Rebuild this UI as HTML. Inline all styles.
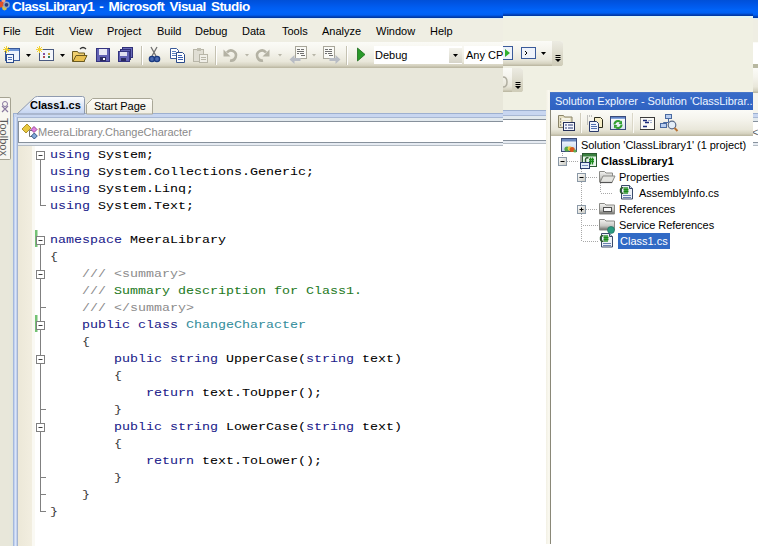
<!DOCTYPE html>
<html><head><meta charset="utf-8"><style>
*{margin:0;padding:0;box-sizing:border-box}
html,body{width:758px;height:546px;overflow:hidden;background:#fff}
body{position:relative;font-family:"Liberation Sans",sans-serif;font-size:11px;color:#000}
.a{position:absolute}
.t{position:absolute;white-space:pre;line-height:13px}
.l{position:absolute;left:50px;white-space:pre;font-family:"Liberation Mono",monospace;font-size:13.333px;line-height:17px;color:#000;transform:scaleY(.82);transform-origin:0 12px;-webkit-text-stroke:.05px currentColor}
.k{color:#20208a}
.c{color:#1e7a1e}
.g{color:#8c8c8c;-webkit-text-stroke:0}
.ty{color:#348e9c}
.b{color:#3a3a3a;-webkit-text-stroke:0}
</style></head><body>
<div class="a" style="left:0;top:0;width:758px;height:546px;overflow:hidden">
<div class="a" style="left:0;top:0;width:758px;height:18px;background:linear-gradient(#0050d8 0,#0056e6 4px,#005ef2 8px,#0064f9 12px,#0060f2 15px,#0046c0 16.5px,#00349a 18px)"></div>
<div class="a" style="left:0;top:18px;width:758px;height:1px;background:#d8ecf8"></div>
<div class="t" style="left:12px;top:0px;line-height:14px;font-weight:bold;font-size:13.5px;letter-spacing:-.55px;word-spacing:2px;color:#fff">ClassLibrary1 - Microsoft Visual Studio</div>
<svg class="a" style="left:0;top:0" width="12" height="14"><circle cx="3.5" cy="1" r="2" fill="#f0a088"/><circle cx="1" cy="4.5" r="3" fill="#e05028"/><circle cx="4.5" cy="8" r="2.4" fill="#d0c050"/><circle cx="6.5" cy="4.8" r="2.6" fill="#283a78" stroke="#90a8c8" stroke-width="1.4"/></svg>
<div class="a" style="left:0;top:19px;width:758px;height:24px;background:#efeee3"></div>
<div class="t" style="left:3px;top:25px">File</div>
<div class="t" style="left:35px;top:25px">Edit</div>
<div class="t" style="left:69px;top:25px">View</div>
<div class="t" style="left:107px;top:25px">Project</div>
<div class="t" style="left:157px;top:25px">Build</div>
<div class="t" style="left:195px;top:25px">Debug</div>
<div class="t" style="left:242px;top:25px">Data</div>
<div class="t" style="left:282px;top:25px">Tools</div>
<div class="t" style="left:322px;top:25px">Analyze</div>
<div class="t" style="left:376px;top:25px">Window</div>
<div class="t" style="left:430px;top:25px">Help</div>
<div class="a" style="left:0;top:68px;width:758px;height:478px;background:#e8e7da"></div>
<div class="a" style="left:0;top:42px;width:758px;height:26px;background:linear-gradient(#fbfbf7,#f5f4ed 35%,#e9e7da 75%,#d6d3c1 90%,#b8b49e)"></div>
<svg class="a" style="left:0;top:43px" width="503" height="25">
    <rect x="5.5" y="5.5" width="14" height="12" fill="#eef3fb" stroke="#3a5a9a"/>
    <rect x="6" y="6" width="13" height="2" fill="#6f96d8"/>
    <rect x="6.5" y="11.5" width="7" height="8" fill="#f4f6fb" stroke="#2c4c8c"/>
    <path d="M8 14.5h4M8 16.5h4" stroke="#4c70b8"/>
    <path d="M4 4l5 5M9 4l-5 5M6.5 3v7M3 6.5h7" stroke="#f2d030"/>
    <path d="M26 11h5l-2.5 3z" fill="#000"/>
    <rect x="39.5" y="6.5" width="14" height="11" fill="#f4f6fb" stroke="#4a5a80"/>
    <rect x="43" y="10" width="2" height="2" fill="#8050a0"/><rect x="48" y="10" width="2" height="2" fill="#c0a040"/>
    <rect x="43" y="13" width="2" height="2" fill="#b05050"/><rect x="48" y="13" width="2" height="2" fill="#308060"/>
    <path d="M37 4l5 5M42 4l-5 5M39.5 3v7M36 6.5h7" stroke="#f2d030"/>
    <path d="M60 11h5l-2.5 3z" fill="#000"/>
    <path d="M72.5 8.5h5l1 1.5h6v8.5h-12z" fill="#f0d070" stroke="#6a5a20"/>
    <path d="M73 18.5l3-6h11l-3 6z" fill="#e8c050" stroke="#6a5a20"/>
    <path d="M80 6q3-3 6 0" stroke="#303030" fill="none" stroke-width="1.2"/>
    <rect x="96.5" y="5.5" width="13" height="13" fill="#6262b4" stroke="#343480"/>
    <rect x="99" y="6" width="8" height="6" fill="#e8e8f4"/>
    <rect x="100" y="14" width="6" height="4" fill="#2a2a60"/><rect x="103" y="15" width="2" height="2" fill="#fff"/>
    <rect x="122.5" y="4.5" width="10" height="10" fill="#6a6ab8" stroke="#303078"/>
    <rect x="120.5" y="6.5" width="10" height="10" fill="#6060b0" stroke="#303078"/>
    <rect x="118.5" y="8.5" width="11" height="10" fill="#6262b4" stroke="#343480"/>
    <rect x="120" y="9" width="7" height="4" fill="#e0e0f0"/>
    <rect x="121" y="15" width="5" height="3" fill="#2a2a60"/>
    <path d="M141.5 3v19" stroke="#c5c2b2"/><path d="M142.5 3v19" stroke="#fff"/>
    <path d="M151 4l5 9M157 4l-5 9" stroke="#707070" stroke-width="1.3"/>
    <circle cx="152" cy="16" r="2.6" fill="#4a6ab0" stroke="#1a3a80" stroke-width="1.4"/>
    <circle cx="157" cy="16" r="2.6" fill="#4a6ab0" stroke="#1a3a80" stroke-width="1.4"/>
    <path d="M170.5 5.5h6l2 2v8h-8z" fill="#fff" stroke="#3a5a9a"/>
    <path d="M172 8.5h4M172 10.5h5M172 12.5h5" stroke="#5a80c0"/>
    <path d="M176.5 9.5h6l2 2v8h-8z" fill="#fff" stroke="#2a4a8a"/>
    <path d="M178 12.5h4M178 14.5h5M178 16.5h5" stroke="#3a60b0"/>
    <rect x="193.5" y="6.5" width="10" height="12" fill="#e0ded4" stroke="#b8b6a8"/>
    <rect x="197" y="5" width="4" height="3" fill="#c0beb0"/>
    <rect x="199.5" y="11.5" width="8" height="8" fill="#f0efe8" stroke="#b8b6a8"/>
    <path d="M201 14.5h5M201 16.5h5" stroke="#b8b6a8"/>
    <path d="M215.5 3v19" stroke="#c5c2b2"/><path d="M216.5 3v19" stroke="#fff"/>
    <path d="M227 9.5a5 5 0 1 1 3 8" stroke="#b4b2a4" fill="none" stroke-width="2.6"/>
    <path d="M223.5 6.5v7h7z" fill="#b4b2a4"/>
    <path d="M245 11h4l-2 2.5z" fill="#b8b6a8"/>
    <path d="M266 9.5a5 5 0 1 0-3 8" stroke="#b4b2a4" fill="none" stroke-width="2.6"/>
    <path d="M269.5 6.5v7h-7z" fill="#b4b2a4"/>
    <path d="M278 11h4l-2 2.5z" fill="#b8b6a8"/>
    <rect x="295.5" y="3.5" width="11" height="12" fill="#fafaf6" stroke="#a8a69a"/>
    <path d="M297 6.5h3M301 6.5h3M297 8.5h7M297 10.5h2M300 10.5h4M301 12.5h4" stroke="#707070"/>
    <path d="M289.5 16.5l5-4.5v3h6v3h-6v3z" fill="#b8bcc4"/>
    <path d="M312 11h4l-2 2.5z" fill="#b8b6a8"/>
    <rect x="323.5" y="3.5" width="11" height="12" fill="#fafaf6" stroke="#a8a69a"/>
    <path d="M325 6.5h3M329 6.5h3M325 8.5h7M325 10.5h2M328 10.5h4M329 12.5h4" stroke="#707070"/>
    <path d="M340.5 16.5l-5-4.5v3h-6v3h6v3z" fill="#b8bcc4"/>
    <path d="M346.5 3v19" stroke="#c5c2b2"/><path d="M347.5 3v19" stroke="#fff"/>
    <path d="M357.5 5l7.5 6.5-7.5 6.5z" fill="#2a9a2a" stroke="#1a6a1a" stroke-width=".8"/>
    <rect x="374" y="3" width="88" height="18" fill="#fff"/>
    <defs><linearGradient id="dd" x1="0" y1="0" x2="0" y2="1"><stop offset="0" stop-color="#f4f3ec"/><stop offset="1" stop-color="#d6d4c8"/></linearGradient></defs>
    <rect x="449" y="5" width="13" height="15" fill="url(#dd)"/>
    <path d="M453 11h5l-2.5 3z" fill="#000"/>
    <rect x="464" y="3" width="39" height="18" fill="#fff"/>
  </svg>
<div class="t" style="left:375px;top:49px">Debug</div>
<div class="t" style="left:466px;top:49px">Any CPU</div>
<div class="a" style="left:753px;top:43px;width:5px;height:21px;background:#fff"></div>
<div class="a" style="left:753px;top:64px;width:5px;height:4px;background:#b8b8a0"></div>
<div class="a" style="left:753px;top:68px;width:5px;height:25px;background:linear-gradient(#fbfbf7,#f5f4ed 35%,#e9e7da 75%,#d6d3c1 90%,#b8b49e)"></div>
<div class="a" style="left:753px;top:93px;width:5px;height:20px;background:#f6f5ee"></div>
<div class="a" style="left:0;top:97px;width:11px;height:63px;background:#f8f7f1;border:1px solid #a5a392;border-left:none;border-radius:0 2px 2px 0"></div>
<svg class="a" style="left:0;top:100px" width="11" height="14"><circle cx="5" cy="4" r="2.5" fill="none" stroke="#8a7aa0"/><path d="M2 12l6-6M8 12l-6-6" stroke="#8a7aa0" stroke-width="1.2"/></svg>
<div class="t" style="left:-3px;top:118px;writing-mode:vertical-rl;font-size:11px;color:#5a5a5a">Toolbox</div>
<div class="a" style="left:13px;top:113px;width:745px;height:433px;background:#c8d6f0;border-top:1px solid #9db0d0;border-left:1px solid #9db0d0"></div>
<div class="a" style="left:18px;top:117px;width:740px;height:1px;background:#a8b8d4"></div>
<div class="a" style="left:18px;top:118px;width:740px;height:3px;background:#e2e9ee"></div>
<div class="a" style="left:13px;top:117px;width:5px;height:429px;background:linear-gradient(90deg,#a4b8dc 0 1px,#c2d2f0 1px 2px,#dce6f8 2px 3px,#c2d2f0 3px 4px,#a4b4d0 4px 5px)"></div>
<div class="a" style="left:9px;top:160px;width:4px;height:386px;background:linear-gradient(90deg,#e8e7da,#dfe5dc)"></div>
<svg class="a" style="left:12px;top:95px" width="160" height="20">
    <defs><linearGradient id="tg" x1="0" y1="0" x2="0" y2="1"><stop offset="0" stop-color="#fcfdff"/><stop offset="1" stop-color="#c3d3f0"/></linearGradient>
    <linearGradient id="tg2" x1="0" y1="0" x2="0" y2="1"><stop offset="0" stop-color="#fdfcf8"/><stop offset="1" stop-color="#f0eee2"/></linearGradient></defs>
    <path d="M74.5 19V9.5L80.5 3.5H138.5q2 0 2 2V19z" fill="url(#tg2)" stroke="#a9a797"/>
    <path d="M5 19L22.5 2.5q1-1 3-1H70.5q2 0 2 2V19z" fill="url(#tg)" stroke="#8e9aaf"/>
  </svg>
<div class="t" style="left:30px;top:99px;font-weight:bold">Class1.cs</div>
<div class="t" style="left:94px;top:100px">Start Page</div>
<div class="a" style="left:18px;top:121px;width:740px;height:22px;background:#fff;border:1px solid #87919c;border-right:none"></div>
<div class="a" style="left:18px;top:143px;width:740px;height:2px;background:#e6ebf2"></div>
<div class="a" style="left:18px;top:145px;width:740px;height:1px;background:#b4bcc4"></div>
<div class="t" style="left:38px;top:126px;color:#8a8a8a">MeeraLibrary.ChangeCharacter</div>
<svg class="a" style="left:21px;top:124px" width="18" height="18">
    <path d="M11 6.5H8.5V12.5H11" stroke="#707070" fill="none"/>
    <path d="M1 5L6 0L10 4L5 9z" fill="#e8c840" stroke="#a88a20" stroke-width=".9"/>
    <path d="M10 5.5L13 2.5L16 5.5L13 8.5z" fill="#e080e0" stroke="#8a3a8a" stroke-width=".9"/>
    <path d="M10.3 12L13.3 9L16.3 12L13.3 15z" fill="#80a8d8" stroke="#2a4a7a" stroke-width=".9"/>
  </svg>
<div class="a" style="left:18px;top:146px;width:740px;height:400px;background:#fff"></div>
<div class="a" style="left:18px;top:146px;width:14px;height:400px;background:linear-gradient(90deg,#ece8d8,#f2eee0)"></div>
<div class="a" style="left:32px;top:146px;width:3px;height:400px;background:#faf9f3"></div>
<svg class="a" style="left:30px;top:145px" width="20" height="401"><rect x="5" y="85" width="2.5" height="17" fill="#74c274"/><rect x="5" y="170" width="2.5" height="17" fill="#74c274"/><path d="M10.5 15V61" stroke="#808080"/><path d="M10 60.5h6" stroke="#808080"/><path d="M10.5 100V367" stroke="#808080"/><path d="M10 366.5h6" stroke="#808080"/><path d="M10 162.5h6" stroke="#808080"/><path d="M10 264.5h6" stroke="#808080"/><path d="M10 332.5h6" stroke="#808080"/><path d="M10 349.5h6" stroke="#808080"/><rect x="6.5" y="6.5" width="8" height="8" fill="#fff" stroke="#808080"/><path d="M8.5 10.5h4" stroke="#404040"/><rect x="6.5" y="91.5" width="8" height="8" fill="#fff" stroke="#808080"/><path d="M8.5 95.5h4" stroke="#404040"/><rect x="6.5" y="125.5" width="8" height="8" fill="#fff" stroke="#808080"/><path d="M8.5 129.5h4" stroke="#404040"/><rect x="6.5" y="176.5" width="8" height="8" fill="#fff" stroke="#808080"/><path d="M8.5 180.5h4" stroke="#404040"/><rect x="6.5" y="210.5" width="8" height="8" fill="#fff" stroke="#808080"/><path d="M8.5 214.5h4" stroke="#404040"/><rect x="6.5" y="278.5" width="8" height="8" fill="#fff" stroke="#808080"/><path d="M8.5 282.5h4" stroke="#404040"/></svg>
<div class="l" style="top:146px"><span class="k">using</span> System;</div>
<div class="l" style="top:163px"><span class="k">using</span> System.Collections.Generic;</div>
<div class="l" style="top:180px"><span class="k">using</span> System.Linq;</div>
<div class="l" style="top:197px"><span class="k">using</span> System.Text;</div>
<div class="l" style="top:231px"><span class="k">namespace</span> MeeraLibrary</div>
<div class="l" style="top:248px"><span class="b">{</span></div>
<div class="l" style="top:265px">    <span class="g">/// &lt;summary&gt;</span></div>
<div class="l" style="top:282px">    <span class="g">///</span><span class="c"> Summary description for Class1.</span></div>
<div class="l" style="top:299px">    <span class="g">/// &lt;/summary&gt;</span></div>
<div class="l" style="top:316px">    <span class="k">public class</span> <span class="ty">ChangeCharacter</span></div>
<div class="l" style="top:333px">    <span class="b">{</span></div>
<div class="l" style="top:350px">        <span class="k">public string</span> UpperCase(<span class="k">string</span> text)</div>
<div class="l" style="top:367px">        <span class="b">{</span></div>
<div class="l" style="top:384px">            <span class="k">return</span> text.ToUpper();</div>
<div class="l" style="top:401px">        <span class="b">}</span></div>
<div class="l" style="top:418px">        <span class="k">public string</span> LowerCase(<span class="k">string</span> text)</div>
<div class="l" style="top:435px">        <span class="b">{</span></div>
<div class="l" style="top:452px">            <span class="k">return</span> text.ToLower();</div>
<div class="l" style="top:469px">        <span class="b">}</span></div>
<div class="l" style="top:486px">    <span class="b">}</span></div>
<div class="l" style="top:503px"><span class="b">}</span></div>
<div class="t" style="left:752px;top:126px;color:#606060">&lt;</div>
</div>
<div class="a" style="left:503px;top:0;width:250px;height:546px;overflow:hidden">
<div class="a" style="left:0;top:0;width:250px;height:16px;background:linear-gradient(#0050d8 0,#0056e6 4px,#005ef2 8px,#0064f9 10px,#0060f2 13px,#0046c0 14.5px,#00349a 16px)"></div>
<div class="a" style="left:0;top:16px;width:250px;height:2px;background:#e2f6f4"></div>
<div class="a" style="left:0;top:18px;width:250px;height:526px;background:#f0f0e3"></div>
<div class="a" style="left:0;top:110px;width:43px;height:1px;background:#9db0d0"></div>
<div class="a" style="left:0;top:111px;width:43px;height:4px;background:#c8d6f0"></div>
<div class="a" style="left:0;top:115px;width:43px;height:1px;background:#a8b8d4"></div>
<div class="a" style="left:0;top:116px;width:43px;height:3px;background:#e2e9ee"></div>
<div class="a" style="left:0;top:119px;width:43px;height:22px;background:#fff;border-top:1px solid #87919c;border-bottom:1px solid #87919c"></div>
<div class="a" style="left:0;top:141px;width:43px;height:2px;background:#e6ebf2"></div>
<div class="a" style="left:0;top:143px;width:43px;height:1px;background:#b4bcc4"></div>
<div class="a" style="left:0;top:144px;width:43px;height:402px;background:#fff"></div>
<div class="a" style="left:0;top:544px;width:250px;height:2px;background:#fff"></div>
<div class="a" style="left:0;top:41px;width:60px;height:25px;border-radius:0 3px 3px 0;background:linear-gradient(#fbfbf7,#f5f4ed 35%,#e9e7da 75%,#d6d3c1 90%,#b8b49e)"></div>
<div class="a" style="left:49px;top:41px;width:11px;height:25px;border-radius:0 3px 3px 0;background:linear-gradient(#ecebe2,#cfccb8)"></div>
<div class="a" style="left:0;top:68px;width:20px;height:24px;border-radius:0 3px 3px 0;background:linear-gradient(#fbfbf7,#f5f4ed 35%,#e9e7da 75%,#d6d3c1 90%,#b8b49e)"></div>
<div class="a" style="left:9px;top:68px;width:11px;height:24px;border-radius:0 3px 3px 0;background:linear-gradient(#ecebe2,#cfccb8)"></div>
<svg class="a" style="left:0;top:41px" width="60" height="52">
    <rect x="-4.5" y="5.5" width="14" height="13" fill="#eef2fa" stroke="#3a5a9a"/>
    <path d="M2 8l5 4-5 4z" fill="#30b030"/>
    <rect x="18.5" y="6.5" width="14" height="11" fill="#eef2fa" stroke="#3a5a9a"/>
    <path d="M22 10l2 2-2 2" stroke="#000" fill="none"/>
    <path d="M38 11h5l-2.5 3z" fill="#000"/>
    <path d="M52.5 14.5h5M52.5 16.5h5" stroke="#000"/><path d="M52 18h6l-3 3z" fill="#000"/>
    <path d="M12.5 41.5h5M12.5 43.5h5" stroke="#000"/><path d="M12 45h6l-3 3z" fill="#000"/>
    <path d="M0 36q4 0 4 5t-4 5" stroke="#b0aea0" fill="none" stroke-width="1.5"/>
  </svg>
<div class="a" style="left:0;top:41px;width:0px;height:25px;background:#fff"></div>
<div class="a" style="left:43px;top:90px;width:207px;height:454px;background:linear-gradient(90deg,#f2f0e4,#fbfaf2 3px,#f4f2e6 4px)"></div>
<div class="a" style="left:47px;top:109px;width:1px;height:435px;background:#8a8878"></div>
<div class="a" style="left:48px;top:92px;width:202px;height:452px;background:#fff"></div>
<div class="a" style="left:47px;top:92px;width:203px;height:18px;background:linear-gradient(#5a80c8 0,#3a6cc8 1px,#3366c6 60%,#2f62c0)"></div>
<div class="t" style="left:52px;top:95px;color:#eef6ff;letter-spacing:-.05px">Solution Explorer - Solution 'ClassLibrar...</div>
<div class="a" style="left:48px;top:110px;width:202px;height:26px;background:linear-gradient(#fbfbf7,#f5f4ed 35%,#e9e7da 75%,#d6d3c1 90%,#b8b49e)"></div>
<svg class="a" style="left:48px;top:110px" width="202" height="26">
    <defs>
      <linearGradient id="rw" x1="0" y1="0" x2="0" y2="1"><stop offset="0" stop-color="#ffffff"/><stop offset="1" stop-color="#d8e2f0"/></linearGradient>
      <linearGradient id="rt" x1="0" y1="0" x2="0" y2="1"><stop offset="0" stop-color="#4a72c0"/><stop offset="1" stop-color="#9ab4e0"/></linearGradient>
    </defs>
    <!-- properties -->
    <path d="M7.5 17.5V5.5h5l1 1.5h7.5v10.5z" fill="#e6e0c4" stroke="#8a8468"/>
    <path d="M11 9h8M11 12h8M11 15h4" stroke="#fbfaf4" stroke-width="1.6"/>
    <path d="M9 9h1M9 12h1M9 15h1" stroke="#505050"/>
    <rect x="12.5" y="12.5" width="11" height="8" fill="#f4f6fc" stroke="#25305a"/>
    <path d="M14 15h2M17 15h5M14 18h2M17 18h5" stroke="#2a3a78" stroke-width="1.2"/>
    <path d="M29.5 3v20" stroke="#cfccbc"/><path d="M30.5 3v20" stroke="#fbfaf5"/>
    <!-- show all files -->
    <path d="M36 6h1M38 6h1M40 6h1M36 8h1M36 10h1M36 12h1M36 14h1" stroke="#8a8a8a"/>
    <path d="M43.5 7.5h6l2 2v8h-8z" fill="#f6eec8" stroke="#2a2a1a"/>
    <path d="M38.5 11.5h7l2 2v8h-9z" fill="#f0f4fc" stroke="#2a3a6a"/>
    <path d="M40 14.5h5M40 16.5h6M40 18.5h6" stroke="#5070b0"/>
    <!-- refresh -->
    <rect x="59.5" y="6.5" width="15" height="13" fill="url(#rw)" stroke="#3a4a7a"/>
    <rect x="60" y="7" width="14" height="2" fill="url(#rt)"/>
    <path d="M63.5 14.5a3.5 3.5 0 0 1 6-2.5" stroke="#30a030" stroke-width="2" fill="none"/>
    <path d="M71 10.5v3.5h-3.5z" fill="#30a030"/>
    <path d="M70.5 14.5a3.5 3.5 0 0 1-6 2.5" stroke="#30a030" stroke-width="2" fill="none"/>
    <path d="M63 18.5v-3.5h3.5z" fill="#30a030"/>
    <path d="M81.5 3v20" stroke="#dad7c8"/><path d="M82.5 3v20" stroke="#fbfaf5"/>
    <!-- view code -->
    <rect x="89.5" y="7.5" width="14" height="12" fill="#fafaf6" stroke="#3a3a3a"/>
    <path d="M89.5 8v11" stroke="#888" stroke-width="1"/>
    <path d="M92 10.5h4M94 12.5h4M92 16.5h4" stroke="#1a2a7a" stroke-width="1.4"/>
    <path d="M97 10.5h4M99 12.5h2" stroke="#a8b4d0" stroke-width="1"/>
    <!-- class diagram -->
    <rect x="114.5" y="4.5" width="6" height="4" fill="#b8cef0" stroke="#4a6aa0"/>
    <rect x="109.5" y="13.5" width="6" height="4" fill="#b8cef0" stroke="#4a6aa0"/>
    <path d="M117.5 9v3.5h-5v1" stroke="#4a6aa0" fill="none"/>
    <circle cx="121" cy="15" r="3.8" fill="#e4eef8" stroke="#5a6a88" stroke-width="1.2"/>
    <path d="M123.5 18l3 3" stroke="#b87030" stroke-width="2"/>
  </svg>
<div class="t" style="left:78px;top:139px;letter-spacing:-.05px">Solution 'ClassLibrary1' (1 project)</div>
<div class="t" style="left:98px;top:155px;font-weight:bold">ClassLibrary1</div>
<div class="t" style="left:116px;top:171px">Properties</div>
<div class="t" style="left:136px;top:187px">AssemblyInfo.cs</div>
<div class="t" style="left:116px;top:203px">References</div>
<div class="t" style="left:116px;top:219px;letter-spacing:-.05px">Service References</div>
<div class="a" style="left:115px;top:233px;width:52px;height:16px;background:#316ac5"></div>
<div class="t" style="left:117px;top:235px;color:#fff">Class1.cs</div>
<svg class="a" style="left:48px;top:136px" width="150" height="120">
    <defs>
      <linearGradient id="fg" x1="0" y1="0" x2="0" y2="1"><stop offset="0" stop-color="#f4f4f2"/><stop offset=".6" stop-color="#c8c8c4"/><stop offset="1" stop-color="#6a6a66"/></linearGradient>
      <linearGradient id="bx" x1="0" y1="0" x2="1" y2="1"><stop offset="0" stop-color="#fff"/><stop offset="1" stop-color="#c8c8c0"/></linearGradient>
      <linearGradient id="sg" x1="0" y1="0" x2="0" y2="1"><stop offset="0" stop-color="#fafcff"/><stop offset="1" stop-color="#c0d4f0"/></linearGradient>
    </defs>
    <g stroke="#a8a8a8" stroke-dasharray="1 1">
    <path d="M11.5 17v4"/><path d="M16 25.5h12"/>
    <path d="M30.5 33v4M30.5 46v60"/>
    <path d="M35 41.5h12M35 73.5h12M32 89.5h15M32 105.5h15"/>
    <path d="M49.5 47v10M50 57.5h11"/>
    </g>
    <rect x="7.5" y="21.5" width="8" height="8" fill="url(#bx)" stroke="#8a98a6"/><path d="M9.5 25.5h4" stroke="#000"/>
    <rect x="26.5" y="37.5" width="8" height="8" fill="url(#bx)" stroke="#8a98a6"/><path d="M28.5 41.5h4" stroke="#000"/>
    <rect x="26.5" y="69.5" width="8" height="8" fill="url(#bx)" stroke="#8a98a6"/><path d="M28.5 73.5h4M30.5 71.5v4" stroke="#000"/>
    <!-- solution -->
    <rect x="10.5" y="2.5" width="15" height="13" fill="url(#sg)" stroke="#3a4a78"/>
    <rect x="11" y="3" width="14" height="2.5" fill="#6a88c0"/>
    <circle cx="16" cy="13" r="2.6" fill="#58a848"/>
    <circle cx="18.8" cy="12.5" r="2.2" fill="#e8d040"/>
    <circle cx="21.2" cy="13.5" r="2.6" fill="#d85a20"/>
    <circle cx="24" cy="15" r="1.6" fill="#60b050"/>
    <!-- project -->
    <rect x="29" y="19" width="3" height="11" fill="#a8aca8"/>
    <rect x="31.5" y="17.5" width="14" height="13" fill="#e8f4ea" stroke="#2a5a30"/>
    <rect x="32" y="18" width="13" height="2.5" fill="#3a803f"/>
    <path d="M37.5 22q-2.5-1-3 1.5v2q.5 2.5 3 1.5" stroke="#2a5a2a" stroke-width="1.4" fill="none"/>
    <path d="M39.5 21.5v7M41.5 21.5v7M38 23.5h5M38 25.5h5" stroke="#1a8a1a" stroke-width="1.3"/>
    <rect x="29.5" y="26.5" width="9" height="6" fill="#e4ecf8" stroke="#2a3a6a"/>
    <path d="M31 29.5h6" stroke="#7a90c0"/>
    <!-- properties folder (open) -->
    <path d="M48.5 35.5h5l1.5 1.5h6.5v9h-13z" fill="url(#fg)" stroke="#8a8a86"/>
    <path d="M49 46.5l3-6.5h12l-3 6.5z" fill="#e4e4e0" stroke="#8a8a86"/>
    <path d="M49 46.5h12" stroke="#555" stroke-width="1.2"/>
    <!-- assemblyinfo.cs -->
    <path d="M70.5 49.5h8l3 3v10.5h-11z" fill="#eef2f8" stroke="#3a4a6a"/>
    <path d="M78.5 49.5v3h3" fill="#c8d0e0" stroke="#3a4a6a"/>
    <path d="M72 59.5h8M72 61.5h8" stroke="#6a80b0"/>
    <path d="M72.5 52q-2.5-1-3 1.5v2q.5 2.5 3 1.5" stroke="#2a5a2a" stroke-width="1.4" fill="none"/>
    <path d="M74 51v7M76 51v7M72.5 53.5h5M72.5 55.5h5" stroke="#1a8a1a" stroke-width="1.3"/>
    <!-- references folder -->
    <path d="M48.5 67.5h5l1.5 1.5h8.5v9h-15z" fill="url(#fg)" stroke="#8a8a86"/>
    <rect x="52.5" y="71.5" width="8" height="4" fill="#f8f8f8" stroke="#505050"/>
    <!-- service references folder -->
    <path d="M48.5 83.5h5l1.5 1.5h8.5v9h-15z" fill="url(#fg)" stroke="#8a8a86"/>
    <circle cx="60" cy="94" r="3.5" fill="#2a9a80" stroke="#1a6a5a" stroke-width=".6"/>
    <!-- class1.cs -->
    <path d="M50.5 97.5h8l3 3v10.5h-11z" fill="#eef2f8" stroke="#3a4a6a"/>
    <path d="M58.5 97.5v3h3" fill="#c8d0e0" stroke="#3a4a6a"/>
    <path d="M52 107.5h8M52 109.5h8" stroke="#6a80b0"/>
    <path d="M52.5 100q-2.5-1-3 1.5v2q.5 2.5 3 1.5" stroke="#2a5a2a" stroke-width="1.4" fill="none"/>
    <path d="M54 99v7M56 99v7M52.5 101.5h5M52.5 103.5h5" stroke="#1a8a1a" stroke-width="1.3"/>
  </svg>
</div>
</body></html>
